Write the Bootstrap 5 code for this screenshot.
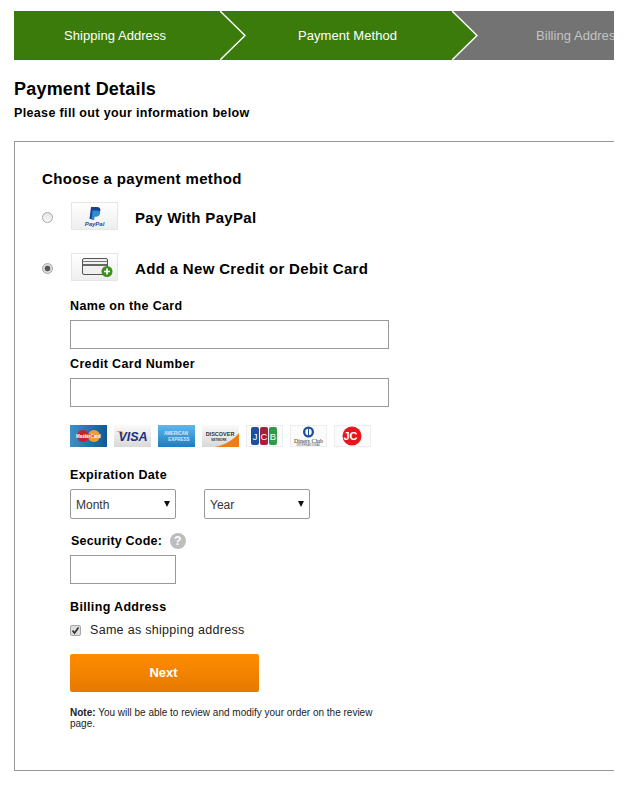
<!DOCTYPE html>
<html>
<head>
  <title>Payment Details</title>
  <link href="https://cdn.jsdelivr.net/npm/bootstrap@5.3.0/dist/css/bootstrap.min.css" rel="stylesheet">
  <style>
    body {
      font-family: "Liberation Sans", Arial, sans-serif;
      color: #000;
      background: #fff;
    }
    .page-wrap {
      width: 600px;
      margin: 11px 0 0 14px;
      overflow: hidden;
    }
    .step-bar {
      height: 49px;
    }
    .step-item {
      position: relative;
      flex: 0 0 232px;
      background: #3a7b0c;
      color: #fff;
      font-size: 13px;
      letter-spacing: .05px;
      padding-left: 23px;
    }
    .step-item.first-step {
      flex-basis: 206px;
      padding-left: 0;
      padding-right: 4px;
    }
    .step-item.todo-step {
      background: #737373;
      color: #c4c4c4;
      padding-left: 22px;
    }
    .step-tip {
      position: absolute;
      left: 100%;
      top: 0;
      z-index: 1;
    }
    .page-title {
      font-size: 18px;
      font-weight: 700;
      line-height: 22px;
      letter-spacing: .2px;
      margin: 18px 0 0;
    }
    .page-sub {
      font-size: 12.5px;
      font-weight: 700;
      line-height: 16px;
      letter-spacing: .35px;
      margin: 5px 0 0;
    }
    .pay-frame {
      width: 640px;
      height: 630px;
      margin-top: 20px;
      border: 1px solid #999;
      padding: 28px 0 0 27px;
    }
    .frame-head {
      font-size: 15px;
      font-weight: 700;
      line-height: 18px;
      letter-spacing: .35px;
      margin: 0 0 14px;
    }
    .method-row {
      height: 28px;
      margin-bottom: 23px;
    }
    .method-radio {
      appearance: none;
      width: 11px;
      height: 11px;
      margin: 2px 18px 0 0;
      border: 1px solid #a6a6a6;
      border-radius: 50%;
      background: linear-gradient(#e4e4e4, #fafafa);
    }
    .method-radio:checked {
      background: radial-gradient(circle, #555 0 2.5px, #ddd 3.2px);
    }
    .method-logo {
      display: block;
      width: 47px;
      height: 28px;
      margin-right: 17px;
      border: 1px solid #e6e6e6;
      background: linear-gradient(#fff, #eee);
    }
    .method-logo svg {
      display: block;
      margin: -1px;
    }
    .method-name {
      padding-top: 4px;
      font-size: 15px;
      font-weight: 700;
      letter-spacing: .33px;
    }
    .card-form {
      width: 319px;
      margin: -5px 0 0 28px;
    }
    .field-label {
      display: block;
      font-size: 12.5px;
      font-weight: 700;
      line-height: 14px;
      letter-spacing: .35px;
      margin: 0 0 7px;
    }
    .field-box {
      display: block;
      width: 319px;
      height: 29px;
      margin-bottom: 8px;
      border: 1px solid #999;
      background: #fff;
    }
    .brand-row {
      gap: 7px;
      margin: 18px 0 21px;
    }
    .brand-row svg {
      display: block;
    }
    .date-row {
      gap: 28px;
    }
    .date-select {
      appearance: none;
      width: 106px;
      height: 30px;
      padding: 1px 5px 0;
      border: 1px solid #999;
      border-radius: 2px;
      font-size: 12px;
      color: #333;
      background: #fff url("data:image/svg+xml,%3Csvg xmlns='http://www.w3.org/2000/svg' width='6' height='6'%3E%3Cpath d='M0 0h6L3 6z' fill='%23111'/%3E%3C/svg%3E") no-repeat right 5px center;
    }
    .field-label.code-label {
      margin: 14px 0 6px 1px;
      letter-spacing: .2px;
    }
    .help-dot {
      display: inline-flex;
      align-items: center;
      justify-content: center;
      width: 16px;
      height: 16px;
      margin-left: 4px;
      border-radius: 50%;
      background: #bdbdbd;
      color: #fff;
      font-size: 12px;
      font-weight: 700;
      letter-spacing: 0;
    }
    .code-box {
      width: 106px;
      height: 29px;
      margin-bottom: 16px;
    }
    .same-row {
      font-size: 12.5px;
      color: #222;
      letter-spacing: .3px;
      margin: 0 0 14px;
    }
    .same-row input {
      appearance: none;
      width: 11px;
      height: 11px;
      margin: 0 9px 0 0;
      border: 1px solid #a6a6a6;
      border-radius: 2px;
      background: #dedede url("data:image/svg+xml,%3Csvg xmlns='http://www.w3.org/2000/svg' width='9' height='9'%3E%3Cpath d='M1.500 4.500L3.500 7L7.500 1.500' fill='none' stroke='%23333' stroke-width='1.700'/%3E%3C/svg%3E") no-repeat center;
    }
    .next-btn {
      display: block;
      width: 189px;
      height: 38px;
      padding: 0 2px 0 0;
      border: 0;
      border-radius: 2px;
      background: linear-gradient(#ff8c00, #e67a00);
      color: #fff;
      font-size: 13px;
      font-weight: 700;
    }
    .note-line {
      font-size: 10px;
      line-height: 11px;
      color: #222;
      margin: 15px 0 0;
    }
  </style>
</head>
<body>
  <div class="page-wrap">
    <div class="step-bar d-flex">
      <div class="step-item first-step d-flex align-items-center justify-content-center">
        Shipping Address
        <svg class="step-tip" width="26" height="49"><path d="M0 0L25 24.500L0 49z" fill="#3a7b0c"/><path d="M0 0L25 24.500L0 49" fill="none" stroke="#fff" stroke-width="1.500"/></svg>
      </div>
      <div class="step-item d-flex align-items-center justify-content-center">
        Payment Method
        <svg class="step-tip" width="26" height="49"><path d="M0 0L25 24.500L0 49z" fill="#3a7b0c"/><path d="M0 0L25 24.500L0 49" fill="none" stroke="#fff" stroke-width="1.500"/></svg>
      </div>
      <div class="step-item todo-step d-flex align-items-center justify-content-center">
        Billing Address
      </div>
    </div>

    <h1 class="page-title">Payment Details</h1>
    <p class="page-sub">Please fill out your information below</p>

    <div class="pay-frame">
      <h2 class="frame-head">Choose a payment method</h2>

      <div class="method-row d-flex align-items-center">
        <input class="method-radio" type="radio" name="method">
        <span class="method-logo">
          <svg width="47" height="28" viewBox="0 0 47 28">
            <path d="M20 5h6c2.500 0 3.800 1.500 3.300 3.700-.6 2.600-2.500 3.800-4.800 3.800h-1.600l-.8 4.500h-3.600z" fill="#1a3f8f"/>
            <path d="M21.500 8.500h5c1.800 0 2.900 1.200 2.500 3-.5 2.200-2.100 3.200-4 3.200h-1.300l-.6 3.300h-2.600z" fill="#2a8fd0"/>
            <text x="23.500" y="24" text-anchor="middle" font-family="Liberation Sans" font-size="6" font-weight="700" font-style="italic" fill="#1f4f9c">PayPal</text>
          </svg>
        </span>
        <span class="method-name">Pay With PayPal</span>
      </div>

      <div class="method-row d-flex align-items-center">
        <input class="method-radio" type="radio" name="method" checked>
        <span class="method-logo">
          <svg width="47" height="28" viewBox="0 0 47 28">
            <rect x="11.500" y="5.500" width="25" height="16" rx="1.500" fill="#f0f0f0" stroke="#555"/>
            <rect x="12" y="8" width="24" height="1" fill="#777"/>
            <rect x="12" y="11" width="24" height="2" fill="#666"/>
            <circle cx="36" cy="18.500" r="5.500" fill="#3f8f1e"/>
            <path d="M36 15.500v6M33 18.500h6" stroke="#fff" stroke-width="1.700"/>
          </svg>
        </span>
        <span class="method-name">Add a New Credit or Debit Card</span>
      </div>

      <div class="card-form">
        <label class="field-label">Name on the Card</label>
        <input class="field-box" type="text">
        <label class="field-label">Credit Card Number</label>
        <input class="field-box" type="text">

        <div class="brand-row d-flex">
          <svg width="37" height="22" viewBox="0 0 37 22">
            <defs>
              <linearGradient id="mcBg" x1="0" x2="1"><stop offset="0" stop-color="#3f8fc4"/><stop offset="1" stop-color="#0f5a94"/></linearGradient>
              <linearGradient id="amexBg" x1="0" x2="0" y1="0" y2="1"><stop offset="0" stop-color="#62b8ec"/><stop offset="1" stop-color="#1c7cc0"/></linearGradient>
              <linearGradient id="greyBg" x1="0" x2="0" y1="0" y2="1"><stop offset="0" stop-color="#fafafa"/><stop offset="1" stop-color="#d9d9d9"/></linearGradient>
            </defs>
            <rect width="37" height="22" fill="url(#mcBg)"/>
            <circle cx="13" cy="11" r="6" fill="#c8202c"/>
            <circle cx="24" cy="11" r="6" fill="#ee9f2d"/>
            <rect x="13" y="9" width="11" height="4" fill="#d9602a"/>
            <text x="18.500" y="12.800" text-anchor="middle" font-family="Liberation Sans" font-size="4.500" font-weight="700" fill="#fff">MasterCard</text>
          </svg>
          <svg width="37" height="22" viewBox="0 0 37 22">
            <rect width="37" height="22" fill="url(#greyBg)"/>
            <path d="M2 6h6l2 4z" fill="#f3a521"/>
            <text x="19" y="16" text-anchor="middle" font-family="Liberation Sans" font-size="12.500" font-weight="700" font-style="italic" fill="#1b2f80">VISA</text>
          </svg>
          <svg width="37" height="22" viewBox="0 0 37 22">
            <rect width="37" height="22" fill="url(#amexBg)"/>
            <text x="18" y="10" text-anchor="middle" font-family="Liberation Sans" font-size="4.500" font-weight="700" fill="#d7ecfa">AMERICAN</text>
            <text x="21" y="15.500" text-anchor="middle" font-family="Liberation Sans" font-size="4.500" font-weight="700" fill="#d7ecfa">EXPRESS</text>
          </svg>
          <svg width="37" height="22" viewBox="0 0 37 22">
            <rect width="37" height="22" fill="url(#greyBg)"/>
            <path d="M13 22C24 20 32 14 37 8v14z" fill="#ef7d14"/>
            <text x="18" y="11" text-anchor="middle" font-family="Liberation Sans" font-size="5.500" font-weight="700" fill="#333">DISCOVER</text>
            <text x="17" y="15.500" text-anchor="middle" font-family="Liberation Sans" font-size="3" font-weight="700" fill="#333">NETWORK</text>
          </svg>
          <svg width="37" height="22" viewBox="0 0 37 22">
            <rect x=".5" y=".5" width="36" height="21" fill="#fbfbfb" stroke="#eee"/>
            <rect x="5" y="2" width="8" height="18" rx="2" fill="#1c4f9c"/>
            <rect x="14" y="2" width="8" height="18" rx="2" fill="#a81e3c"/>
            <rect x="23" y="2" width="8" height="18" rx="2" fill="#2f9a46"/>
            <text x="9" y="15" text-anchor="middle" font-family="Liberation Sans" font-size="9.500" fill="#fff">J</text>
            <text x="18" y="15" text-anchor="middle" font-family="Liberation Sans" font-size="9.500" fill="#fff">C</text>
            <text x="27" y="15" text-anchor="middle" font-family="Liberation Sans" font-size="9.500" fill="#fff">B</text>
          </svg>
          <svg width="37" height="22" viewBox="0 0 37 22">
            <rect x=".5" y=".5" width="36" height="21" fill="#fbfbfb" stroke="#eee"/>
            <circle cx="18.500" cy="7" r="5.500" fill="#1c4f9c"/>
            <circle cx="18.500" cy="7" r="3.200" fill="#fff"/>
            <rect x="18" y="3.500" width="1" height="7" fill="#1c4f9c"/>
            <text x="18.500" y="17.500" text-anchor="middle" font-family="Liberation Serif" font-size="6" fill="#333">Diners Club</text>
            <text x="18.500" y="20.500" text-anchor="middle" font-family="Liberation Sans" font-size="3" fill="#555">INTERNATIONAL</text>
          </svg>
          <svg width="37" height="22" viewBox="0 0 37 22">
            <rect x=".5" y=".5" width="36" height="21" fill="#fbfbfb" stroke="#eee"/>
            <circle cx="18" cy="11" r="9.500" fill="#e8141e"/>
            <text x="16.500" y="15" text-anchor="middle" font-family="Liberation Sans" font-size="11" font-weight="700" fill="#fff">JC</text>
          </svg>
        </div>

        <label class="field-label">Expiration Date</label>
        <div class="date-row d-flex">
          <select class="date-select"><option>Month</option></select>
          <select class="date-select"><option>Year</option></select>
        </div>

        <label class="field-label code-label">Security Code: <span class="help-dot">?</span></label>
        <input class="field-box code-box" type="text">

        <label class="field-label">Billing Address</label>
        <label class="same-row d-flex align-items-center">
          <input type="checkbox" checked>Same as shipping address
        </label>

        <button class="next-btn" type="button">Next</button>
        <p class="note-line"><b>Note:</b> You will be able to review and modify your order on the review page.</p>
      </div>
    </div>
  </div>
  <script src="https://cdn.jsdelivr.net/npm/bootstrap@5.3.0/dist/js/bootstrap.bundle.min.js"></script>
</body>
</html>
